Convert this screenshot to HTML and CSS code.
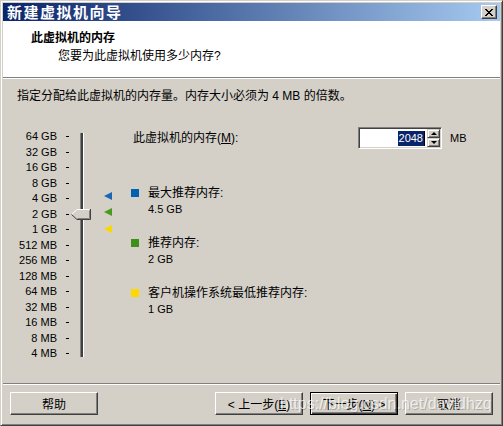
FILE: index.html
```html
<!DOCTYPE html>
<html lang="zh-CN">
<head>
  <meta charset="UTF-8">
  <title>新建虚拟机向导</title>
  <link rel="stylesheet" href="styles.css">
</head>
<body>
  <div class="window">
    <div class="titlebar">
      <span class="title">新建虚拟机向导</span>
      <span class="close">
        <svg width="8" height="7" viewBox="0 0 8 7"><path d="M0 0L7 7M1 0L8 7M7 0L0 7M8 0L1 7" stroke="#000" stroke-width="1"/></svg>
      </span>
    </div>

    <div class="header">
      <h1>此虚拟机的内存</h1>
      <p>您要为此虚拟机使用多少内存?</p>
    </div>

    <div class="main">
      <p class="intro">指定分配给此虚拟机的内存量。内存大小必须为 4 MB 的倍数。</p>

      <div class="content">
        <ul class="scale">
          <li><span>64 GB</span><i></i></li>
          <li><span>32 GB</span><i></i></li>
          <li><span>16 GB</span><i></i></li>
          <li><span>8 GB</span><i></i></li>
          <li><span>4 GB</span><i></i></li>
          <li><span>2 GB</span><i></i></li>
          <li><span>1 GB</span><i></i></li>
          <li><span>512 MB</span><i></i></li>
          <li><span>256 MB</span><i></i></li>
          <li><span>128 MB</span><i></i></li>
          <li><span>64 MB</span><i></i></li>
          <li><span>32 MB</span><i></i></li>
          <li><span>16 MB</span><i></i></li>
          <li><span>8 MB</span><i></i></li>
          <li><span>4 MB</span><i></i></li>
        </ul>

        <div class="slider">
          <div class="track"></div>
          <!-- thumb sits on 2 GB -->
          <svg class="thumb" width="20" height="11" viewBox="0 0 20 11">
            <polygon points="0.5,5.5 6,0.5 19.5,0.5 19.5,10.5 6,10.5" fill="#d4d0c8"/>
            <polyline points="0.5,5.5 6,0.5 18.5,0.5" stroke="#fff" fill="none"/>
            <polyline points="19.5,0 19.5,10.5 6,10.5 0.5,5.5" stroke="#404040" fill="none"/>
            <polyline points="18.5,1.5 18.5,9.5 6.5,9.5" stroke="#808080" fill="none"/>
          </svg>
        </div>

        <div class="markers">
          <span class="mark blue" style="top:65px"></span>
          <span class="mark green" style="top:81px"></span>
          <span class="mark yellow" style="top:98px"></span>
        </div>

        <div class="info">
          <div class="mem-row">
            <label>此虚拟机的内存(<u>M</u>):</label>
            <div class="spin-box">
              <span class="value"><span class="sel">2048</span><span class="caret"></span></span>
              <div class="spin">
                <span><b class="up"></b></span>
                <span><b class="down"></b></span>
              </div>
            </div>
            <span class="unit">MB</span>
          </div>

          <div class="legend">
            <div class="item">
              <div class="name"><span class="sq blue"></span>最大推荐内存:</div>
              <div class="val">4.5 GB</div>
            </div>
            <div class="item">
              <div class="name"><span class="sq green"></span>推荐内存:</div>
              <div class="val">2 GB</div>
            </div>
            <div class="item">
              <div class="name"><span class="sq yellow"></span>客户机操作系统最低推荐内存:</div>
              <div class="val">1 GB</div>
            </div>
          </div>
        </div>
      </div>
    </div>

    <div class="footer">
      <button class="btn">帮助</button>
      <div class="btn-group">
        <button class="btn">&lt; 上一步(<u>E</u>)</button>
        <button class="btn default">下一步(<u>N</u>) &gt;</button>
        <button class="btn">取消</button>
      </div>
      <span class="watermark">https://blog.csdn.net/davidhzq</span>
    </div>
  </div>
</body>
</html>
```

FILE: styles.css
```css
* { box-sizing: border-box; }
body { margin: 0; background: #d4d0c8; color: #000;
  font-family: "Liberation Sans", "Noto Sans CJK SC", sans-serif; font-size: 12px; }

/* window frame */
.window { width: 503px; height: 426px; display: flex; flex-direction: column;
  border: 1px solid; border-color: #d4d0c8 #404040 #404040 #d4d0c8;
  box-shadow: inset 1px 1px #fff, inset -1px -1px #808080; padding: 2px; }

.titlebar { height: 18px; flex: none; display: flex; align-items: center; justify-content: space-between;
  padding: 0 3px 0 4px; background: linear-gradient(to right, #0a246a, #a6caf0); }
.title { color: #fff; font-family: "Noto Sans CJK SC", sans-serif; font-weight: bold;
  font-size: 15px; letter-spacing: 1.5px; line-height: 18px; }
.close { width: 16px; height: 14px; background: #d4d0c8; display: flex; align-items: center; justify-content: center;
  border: 1px solid; border-color: #fff #404040 #404040 #fff; box-shadow: inset -1px -1px #808080; }

/* white header */
.header { height: 57px; flex: none; background: #fff; border-bottom: 1px solid #808080; padding: 9px 0 0 28px; }
.header h1 { margin: 0; font-size: 12px; font-weight: bold; line-height: 16px; }
.header p { margin: 2px 0 0 27px; line-height: 16px; }

.main { flex: 1; border-top: 1px solid #fff; }
.intro { margin: 0; padding: 9px 0 0 14px; line-height: 16px; }

.content { display: flex; margin-top: 23px; }

/* memory scale */
.scale { list-style: none; margin: 0; padding: 2px 0 0; width: 67px; font-size: 11px; }
.scale li { height: 15.5px; display: flex; align-items: center; }
.scale span { width: 54px; text-align: right; line-height: 15px; }
.scale i { width: 3px; height: 1px; background: #000; margin-left: 9px; }

.slider { position: relative; width: 22px; }
.track { position: absolute; left: 10px; top: 6px; width: 4px; height: 224px;
  border-left: 1px solid #808080; border-right: 1px solid #fff; background: #404040; }
.thumb { position: absolute; left: 1px; top: 82px; }

.markers { position: relative; width: 39px; }
.mark { position: absolute; left: 12px; width: 0; height: 0;
  border-top: 4px solid transparent; border-bottom: 4px solid transparent; border-right: 8px solid; }
.mark.blue { border-right-color: #1a66b4; }
.mark.green { border-right-color: #4a9a20; }
.mark.yellow { border-right-color: #f8d800; }

.info { flex: 1; }
.mem-row { display: flex; align-items: center; height: 22px; }
.mem-row label { width: 227px; padding-left: 2px; line-height: 16px; }
.spin-box { display: flex; width: 84px; height: 22px; background: #fff; padding: 1px;
  border: 1px solid; border-color: #808080 #fff #fff #808080;
  box-shadow: inset 1px 1px #404040, inset -1px -1px #d4d0c8; }
.value { flex: 1; display: flex; justify-content: flex-end; align-items: center; padding-right: 2px; font-size: 11px; }
.sel { background: #0a246a; color: #fff; line-height: 15px; padding: 0 1px; }
.caret { width: 1px; height: 15px; background: #000; }
.spin { width: 13px; display: flex; flex-direction: column; }
.spin span { flex: 1; background: #d4d0c8; display: flex; align-items: center; justify-content: center;
  border: 1px solid; border-color: #d4d0c8 #404040 #404040 #d4d0c8;
  box-shadow: inset 1px 1px #fff, inset -1px -1px #808080; }
.spin b { width: 0; height: 0; border-left: 3px solid transparent; border-right: 3px solid transparent; }
.spin .up { border-bottom: 3px solid #000; }
.spin .down { border-top: 3px solid #000; }
.unit { margin-left: 8px; font-size: 11px; }

.legend { margin-top: 36px; display: flex; flex-direction: column; gap: 18px; }
.item .name { display: flex; align-items: center; line-height: 16px; }
.sq { width: 8px; height: 8px; margin-right: 9px; }
.sq.blue { background: #0062b0; }
.sq.green { background: #3f8f1c; }
.sq.yellow { background: #ffd800; }
.item .val { padding-left: 17px; line-height: 16px; font-size: 11px; }

/* buttons */
.footer { position: relative; flex: none; display: flex; justify-content: space-between;
  border-top: 1px solid #808080; box-shadow: inset 0 1px #fff; padding: 8px 7px; }
.btn-group { display: flex; gap: 7px; }
.btn { width: 88px; height: 23px; padding: 0; background: #d4d0c8; color: #000;
  font-family: "Liberation Sans", "Noto Sans CJK SC", sans-serif; font-size: 12px;
  border: 1px solid; border-color: #fff #404040 #404040 #fff; box-shadow: inset -1px -1px #808080; }
.btn.default { border-color: #000; box-shadow: inset 1px 1px #fff, inset -1px -1px #404040, inset -2px -2px #808080; }

.watermark { position: absolute; left: 277px; top: 11px; font-size: 16px; color: rgba(255,255,255,0.7);
  text-shadow: 1px 1px 0 rgba(0,0,0,0.2); pointer-events: none; white-space: nowrap; }
```
